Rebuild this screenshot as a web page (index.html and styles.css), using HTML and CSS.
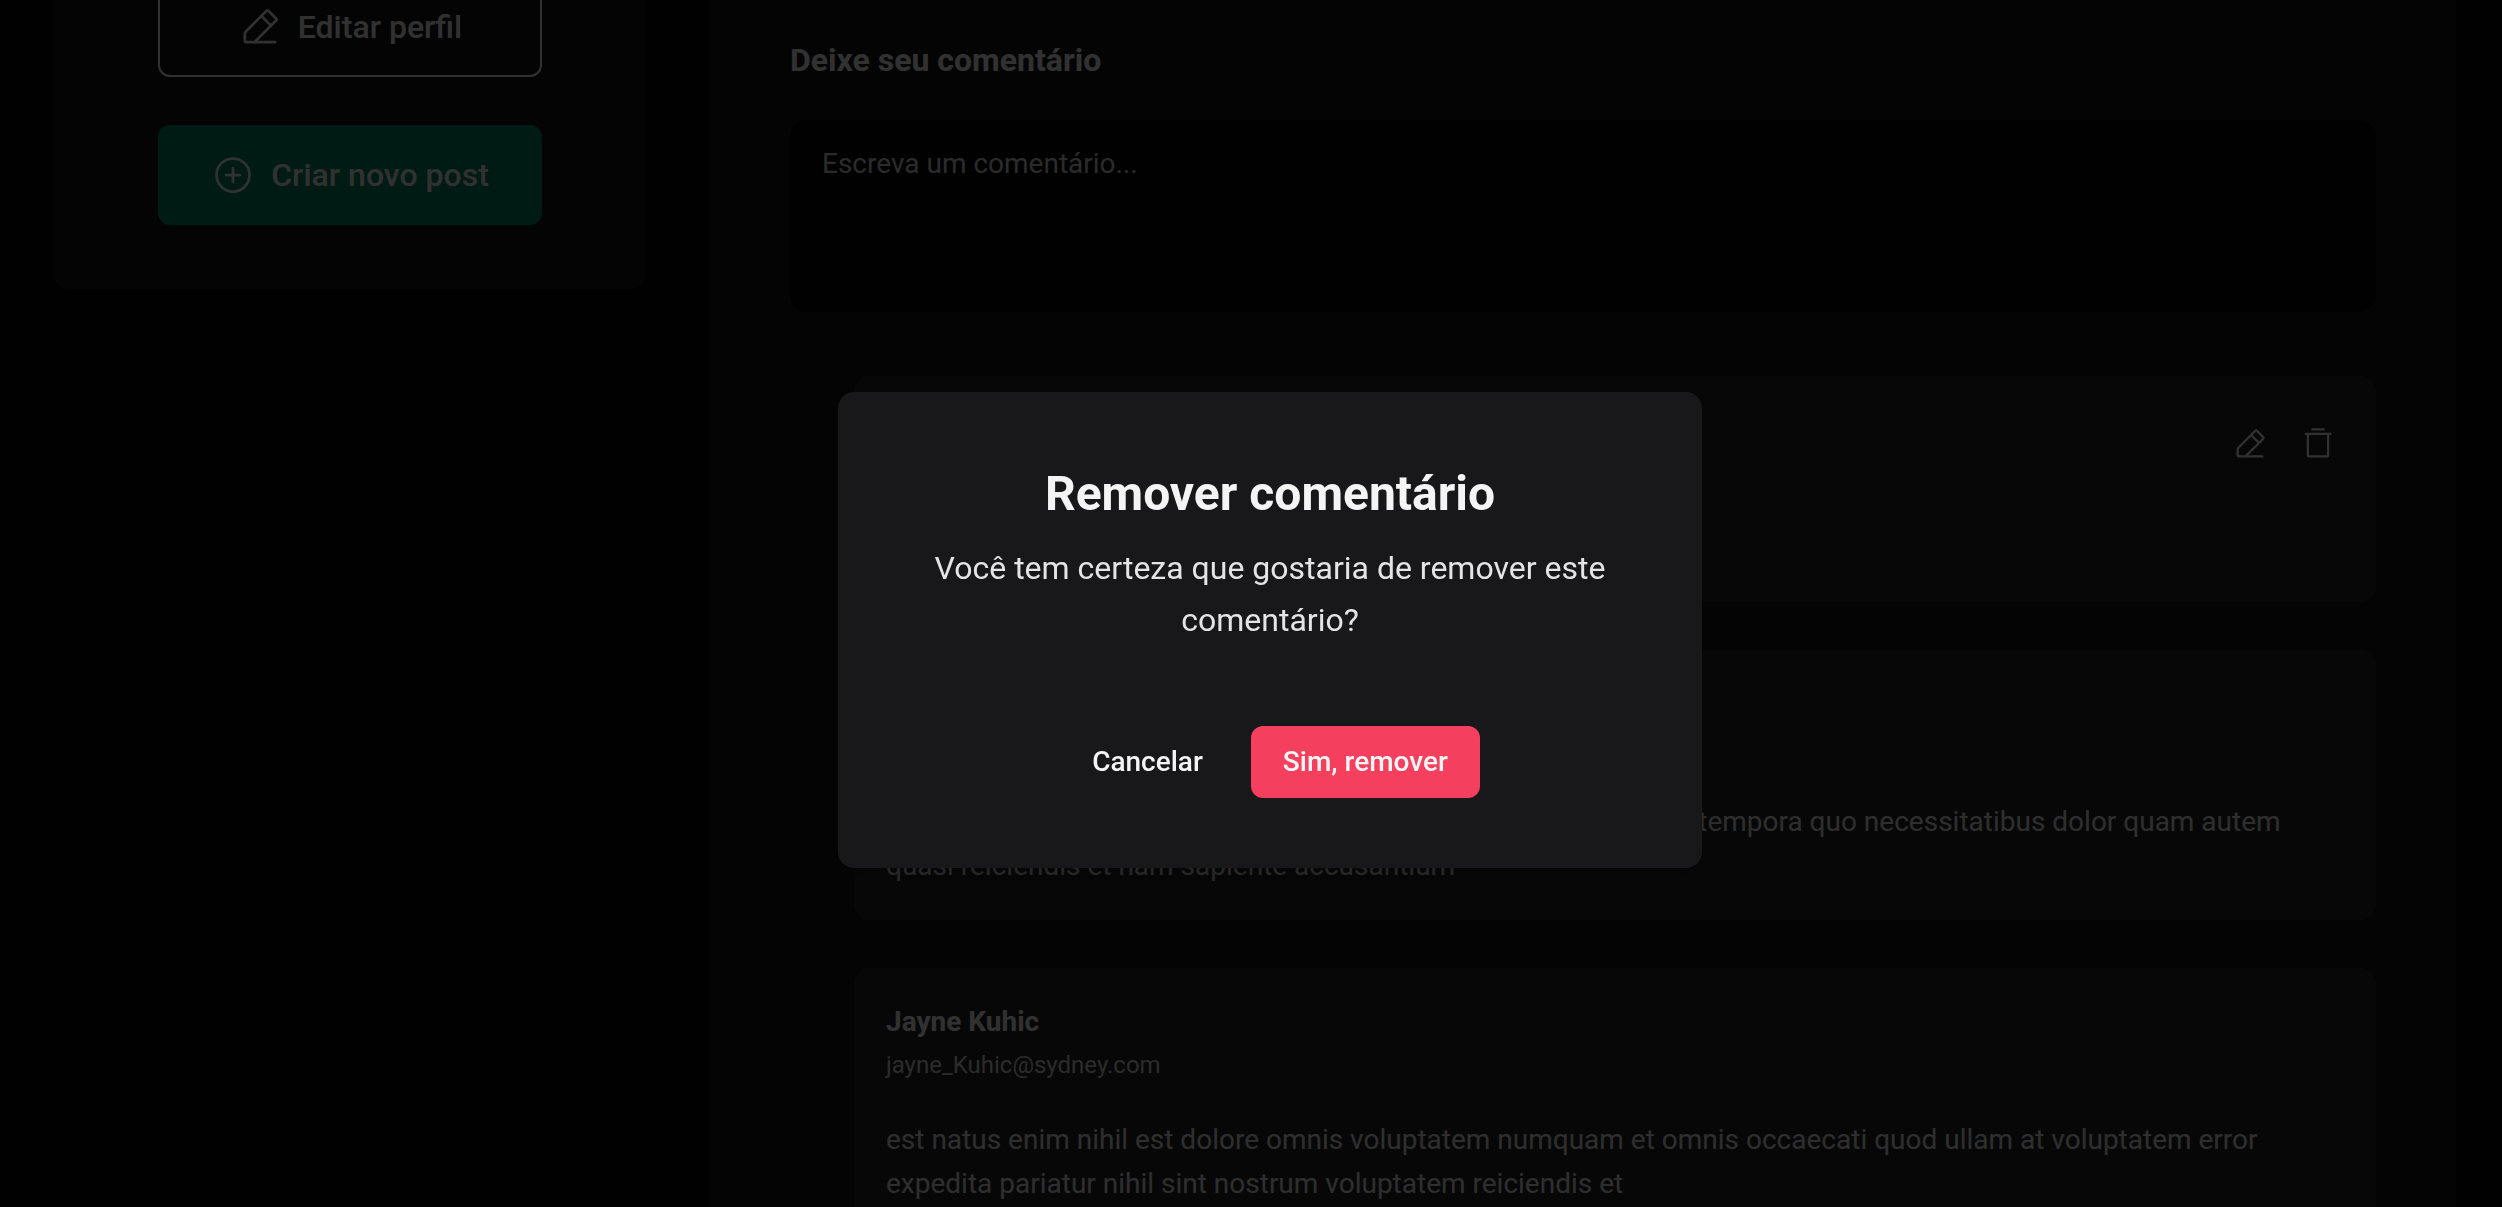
FILE: index.html
```html
<!DOCTYPE html>
<html lang="pt-BR">
<head>
  <meta charset="utf-8">
  <meta name="viewport" content="width=device-width, initial-scale=1">
  <title>Remover comentário</title>
  <link rel="stylesheet" href="styles.css">
</head>
<body>
  <svg class="sprite" aria-hidden="true">
    <symbol id="icon-pencil" viewBox="0 0 256 256">
      <path d="M96,216H48a8,8,0,0,1-8-8V163.31a8,8,0,0,1,2.34-5.65L165.66,34.34a8,8,0,0,1,11.31,0L221.66,79a8,8,0,0,1,0,11.31Z"/>
      <path d="M216,216H96M136,64l56,56"/>
    </symbol>
    <symbol id="icon-plus" viewBox="0 0 256 256">
      <circle cx="128" cy="128" r="96"/>
      <path d="M88,128h80M128,88v80"/>
    </symbol>
    <symbol id="icon-trash" viewBox="0 0 256 256">
      <path d="M216,56H40M88,24h80M200,56V208a8,8,0,0,1-8,8H64a8,8,0,0,1-8-8V56"/>
    </symbol>
  </svg>

  <div class="layout">
    <aside class="profile">
      <button type="button" class="button button-outline">
        <svg class="icon icon-large" aria-hidden="true"><use href="#icon-pencil"/></svg>
        Editar perfil
      </button>
      <button type="button" class="button button-primary">
        <svg class="icon icon-large" aria-hidden="true"><use href="#icon-plus"/></svg>
        Criar novo post
      </button>
    </aside>

    <main class="post">
      <form class="comment-form">
        <label class="form-label" for="new-comment">Deixe seu comentário</label>
        <textarea class="form-field" id="new-comment" placeholder="Escreva um comentário..."></textarea>
      </form>

      <section class="comments">
        <article class="comment">
          <header class="comment-header">
            <div>
              <h3 class="comment-author">Diego</h3>
              <p class="comment-email">diego@email.com</p>
            </div>
            <div class="comment-actions">
              <button type="button" class="icon-button" aria-label="Editar comentário">
                <svg class="icon" aria-hidden="true"><use href="#icon-pencil"/></svg>
              </button>
              <button type="button" class="icon-button" aria-label="Remover comentário">
                <svg class="icon" aria-hidden="true"><use href="#icon-trash"/></svg>
              </button>
            </div>
          </header>
          <p class="comment-text">Oi!</p>
        </article>

        <article class="comment">
          <header class="comment-header">
            <div>
              <h3 class="comment-author">Eliseo Gardner</h3>
              <p class="comment-email">eliseo@gardner.biz</p>
            </div>
          </header>
          <p class="comment-text">laudantium enim quasi est quidem magnam voluptate ipsam eos tempora quo necessitatibus dolor quam autem quasi reiciendis et nam sapiente accusantium</p>
        </article>

        <article class="comment">
          <header class="comment-header">
            <div>
              <h3 class="comment-author">Jayne Kuhic</h3>
              <p class="comment-email">jayne_Kuhic@sydney.com</p>
            </div>
          </header>
          <p class="comment-text">est natus enim nihil est dolore omnis voluptatem numquam et omnis occaecati quod ullam at voluptatem error expedita pariatur nihil sint nostrum voluptatem reiciendis et</p>
        </article>
      </section>
    </main>
  </div>

  <div class="overlay">
    <div class="modal" role="alertdialog" aria-modal="true" aria-labelledby="modal-title" aria-describedby="modal-text">
      <h2 class="modal-title" id="modal-title">Remover comentário</h2>
      <p class="modal-text" id="modal-text">Você tem certeza que gostaria de remover este comentário?</p>
      <div class="modal-actions">
        <button type="button" class="modal-button">Cancelar</button>
        <button type="button" class="modal-button modal-button-danger">Sim, remover</button>
      </div>
    </div>
  </div>
</body>
</html>
```
FILE: styles.css
```css
* {
  box-sizing: border-box;
  margin: 0;
  padding: 0;
}

/* Page scroll is locked while the modal is open */
body {
  height: 100vh;
  overflow: hidden;
  background: #09090a;
  color: #f4f4f5;
  font-family: Roboto, "Liberation Sans", sans-serif;
  font-size: 28px;
  line-height: 44px;
}

button,
textarea {
  border: 0;
  background: none;
  color: inherit;
  font: inherit;
}

.sprite {
  display: none;
}

.icon {
  width: 36px;
  height: 36px;
  fill: none;
  stroke: currentColor;
  stroke-width: 16;
  stroke-linecap: round;
  stroke-linejoin: round;
}

.icon-large {
  width: 44px;
  height: 44px;
}

.layout {
  display: grid;
  grid-template-columns: 592px minmax(0, 1fr);
  align-items: start;
  gap: 64px;
  margin-top: -23px;
  padding: 0 46px 0 54px;
}

.profile {
  display: flex;
  flex-direction: column;
  gap: 48px;
  padding: 0 104px 64px;
  border-radius: 0 0 16px 16px;
  background: #18181b;
}

.button {
  display: flex;
  align-items: center;
  justify-content: center;
  gap: 16px;
  height: 100px;
  border-radius: 12px;
  font-size: 32px;
  font-weight: 500;
}

.button-outline {
  border: 2px solid #f4f4f5;
}

.button-primary {
  background: #00875f;
}

.post {
  padding: 57px 80px;
  background: #18181b;
}

.comment-form {
  display: flex;
  flex-direction: column;
  gap: 34px;
}

.form-label {
  font-size: 32px;
  font-weight: 700;
  line-height: 52px;
}

.form-field {
  height: 192px;
  padding: 24px 32px;
  border-radius: 16px;
  background: #09090a;
  line-height: 40px;
  resize: none;
}

.form-field::placeholder {
  color: #d4d4d8;
  opacity: 1;
}

.comments {
  display: flex;
  flex-direction: column;
  gap: 48px;
  margin-top: 64px;
  padding-left: 64px;
}

.comment {
  display: flex;
  flex-direction: column;
  gap: 32px;
  padding: 32px;
  border-radius: 16px;
  background: #27272a;
}

.comment-header {
  display: flex;
  justify-content: space-between;
}

.comment-author {
  font-size: 28px;
  font-weight: 700;
}

.comment-email {
  color: #d4d4d8;
  font-size: 24px;
  line-height: 42px;
}

.comment-actions {
  display: flex;
  align-items: flex-start;
  gap: 16px;
  padding-top: 10px;
}

.icon-button {
  display: flex;
  padding: 8px;
}

.comment-text {
  color: #e4e4e7;
}

.overlay {
  position: fixed;
  inset: 0;
  display: flex;
  align-items: center;
  justify-content: center;
  padding: 53px 0 0 38px;
  background: rgba(0, 0, 0, 0.8);
}

.modal {
  width: 864px;
  padding: 64px 64px 70px;
  border-radius: 16px;
  background: #18181b;
  box-shadow: 0 20px 30px rgba(0, 0, 0, 0.2);
  text-align: center;
}

.modal-title {
  font-size: 48px;
  font-weight: 700;
  line-height: 76px;
}

.modal-text {
  margin-top: 10px;
  color: #e4e4e7;
  font-size: 32px;
  line-height: 52px;
}

.modal-actions {
  display: flex;
  justify-content: center;
  gap: 16px;
  margin-top: 80px;
}

.modal-button {
  height: 72px;
  padding: 0 32px;
  border-radius: 12px;
  font-weight: 500;
}

.modal-button-danger {
  background: #f43f5e;
}
```
